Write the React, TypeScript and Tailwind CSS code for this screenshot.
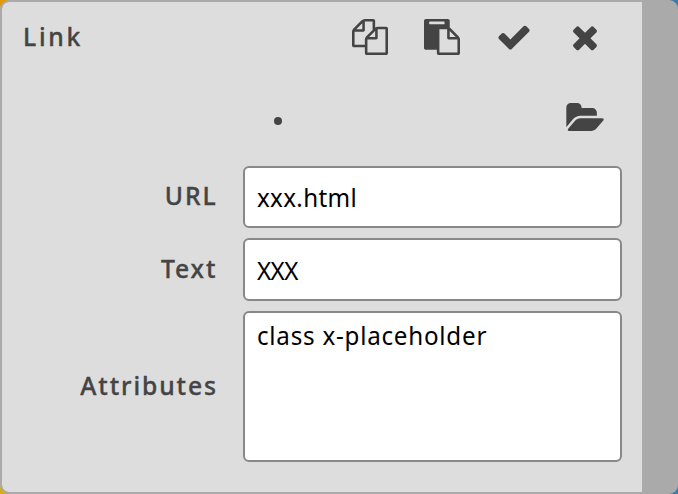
import type { ReactNode } from "react";

const paths = {
  copy: "M1696 384q40 0 68 28t28 68v1216q0 40-28 68t-68 28h-960q-40 0-68-28t-28-68v-288h-544q-40 0-68-28t-28-68v-672q0-40 20-88t48-76l408-408q28-28 76-48t88-20h416q40 0 68 28t28 68v328q68-40 128-40h416zm-544 213l-299 299h299v-299zm-640-384l-299 299h299v-299zm196 647l316-316v-416h-384v416q0 40-28 68t-68 28h-416v640h512v-256q0-40 20-88t48-76zm956 804v-1152h-384v416q0 40-28 68t-68 28h-416v640h896z",
  paste: "M768 1664h896v-640h-416q-40 0-68-28t-28-68v-416h-384v1152zm256-1440v-64q0-13-9.5-22.5t-22.5-9.5h-704q-13 0-22.5 9.5t-9.5 22.5v64q0 13 9.5 22.5t22.5 9.5h704q13 0 22.5-9.5t9.5-22.5zm256 672h299l-299-299v299zm512 128v672q0 40-28 68t-68 28h-960q-40 0-68-28t-28-68v-160h-544q-40 0-68-28t-28-68v-1344q0-40 28-68t68-28h1088q40 0 68 28t28 68v328q21 13 36 28l408 408q28 28 48 76t20 88z",
  check: "M1671 566q0 40-28 68l-724 724-136 136q-28 28-68 28t-68-28l-136-136-362-362q-28-28-28-68t28-68l136-136q28-28 68-28t68 28l294 295 656-657q28-28 68-28t68 28l136 136q28 28 28 68z",
  close: "M1490 1322q0 40-28 68l-136 136q-28 28-68 28t-68-28l-294-294-294 294q-28 28-68 28t-68-28l-136-136q-28-28-28-68t28-68l294-294-294-294q-28-28-28-68t28-68l136-136q28-28 68-28t68 28l294 294 294-294q28-28 68-28t68 28l136 136q28 28 28 68t-28 68l-294 294 294 294q28 28 28 68z",
  folder: "M1815 952q0 31-31 66l-336 396q-43 51-120.5 86.5t-143.5 35.5h-1088q-34 0-60.5-13t-26.5-43q0-31 31-66l336-396q43-51 120.5-86.5t143.5-35.5h1088q34 0 60.5 13t26.5 43zm-343-344v160h-832q-94 0-197 47.5t-164 119.5l-337 396-5 6q0-4-.5-12.5t-.5-12.5v-960q0-92 66-158t158-66h320q92 0 158 66t66 158v32h544q92 0 158 66t66 158z",
};

function Icon({ name }: { name: "copy" | "paste" | "check" | "close" }) {
  return (
    <svg viewBox="0 0 1792 1792" className="size-9 shrink-0" fill="currentColor">
      <path d={paths[name]} />
    </svg>
  );
}

function Row({ label, className, children }: { label: string; className: string; children: ReactNode }) {
  return (
    <div className={`flex items-center ${className}`}>
      <div className="flex w-[241px] shrink-0 justify-end pr-[25.5px] text-[26px] leading-none font-medium">
        <span className="-mt-1 origin-right scale-x-95 tracking-[2px]">{label}</span>
      </div>
      {children}
    </div>
  );
}

export default function App() {
  return (
    <div className="h-[494px] w-[678px] bg-[conic-gradient(#3f7ba8_50%,#d5b010_50%_75%,#e79700_75%)] font-['Noto_Sans','Open_Sans',sans-serif] text-[#444]">
      <div className="flex h-full overflow-hidden rounded-[9px] border-2 border-r-0 border-[#aaa] bg-[#aaa]">
        <main className="w-[640px] shrink-0 rounded-l-[7px] bg-[#ddd]">
          <header className="flex h-[70px] items-start justify-between pt-[17px] pr-[39px] pl-[21px]">
            <h1 className="origin-left scale-x-95 pt-1 text-[26px] leading-none font-medium tracking-[2.9px] [-webkit-text-stroke:0.35px_#444]">Link</h1>
            <div className="flex">
              <div className="mr-[35px] flex gap-9">
                <Icon name="copy" />
                <Icon name="paste" />
                <Icon name="check" />
              </div>
              <Icon name="close" />
            </div>
          </header>
          <div className="flex h-[94px] justify-between pr-[38px] pl-[272.4px]">
            <span className="mt-[45px] size-2 rounded-full bg-[#444]" />
            <svg viewBox="-64 128 1879 1408" className="mt-[31px] h-[28px] w-[38px]" fill="currentColor">
              <path d={paths.folder} />
            </svg>
          </div>
          <div className="flex flex-col gap-[10px] [-webkit-text-stroke:0.35px_#444]">
            <Row className="h-[62px]" label="URL">
              <div className="flex h-full w-[379px] items-center rounded-md border-2 border-[#888] bg-white pl-3 text-[26px] leading-none text-black [-webkit-text-stroke:0]">
                <span className="origin-left scale-x-93 tracking-[0.35px]">xxx.html</span>
              </div>
            </Row>
            <Row className="h-[63px]" label="Text">
              <div className="flex h-full w-[379px] items-center rounded-md border-2 border-[#888] bg-white pl-3 text-[26px] leading-none text-black [-webkit-text-stroke:0]">
                <span className="origin-left scale-x-93 tracking-[-0.6px]">XXX</span>
              </div>
            </Row>
            <Row className="h-[151px]" label="Attributes">
              <div className="h-full w-[379px] rounded-md border-2 border-[#888] bg-white pt-[9px] pl-3 text-[26px] leading-none text-black [-webkit-text-stroke:0]">
                <span className="inline-block origin-left scale-x-93 tracking-[0.82px]">class x-placeholder</span>
              </div>
            </Row>
          </div>
        </main>
      </div>
    </div>
  );
}
